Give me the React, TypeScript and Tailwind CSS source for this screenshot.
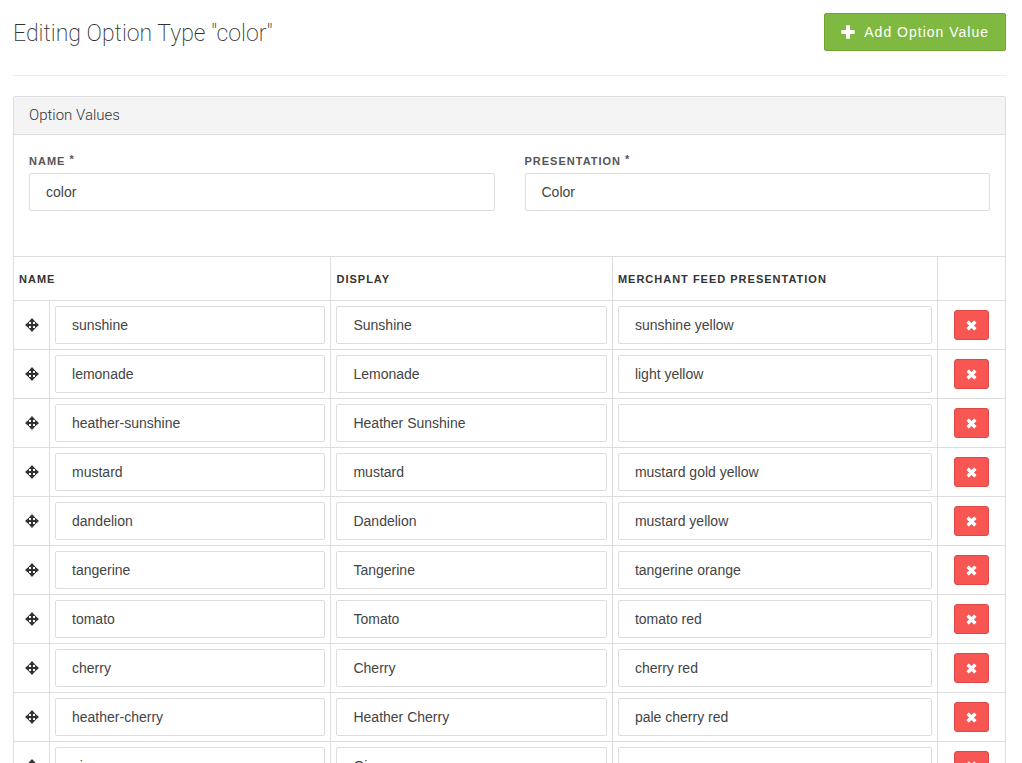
import React from "react";

type OptionValue = { name: string; display: string; feed: string };

const optionValues: OptionValue[] = [
  { name: "sunshine", display: "Sunshine", feed: "sunshine yellow" },
  { name: "lemonade", display: "Lemonade", feed: "light yellow" },
  { name: "heather-sunshine", display: "Heather Sunshine", feed: "" },
  { name: "mustard", display: "mustard", feed: "mustard gold yellow" },
  { name: "dandelion", display: "Dandelion", feed: "mustard yellow" },
  { name: "tangerine", display: "Tangerine", feed: "tangerine orange" },
  { name: "tomato", display: "Tomato", feed: "tomato red" },
  { name: "cherry", display: "Cherry", feed: "cherry red" },
  { name: "heather-cherry", display: "Heather Cherry", feed: "pale cherry red" },
  { name: "ginger", display: "Ginger", feed: "" },
];

const icons = {
  plus: "M5.5 .3h3q.5 0 .5.5V5h4.2q.5 0 .5.5v3q0 .5-.5.5H9v4.2q0 .5-.5.5h-3q-.5 0-.5-.5V9H.8q-.5 0-.5-.5v-3q0-.5.5-.5H5V.8q0-.5.5-.5z",
  move: "M7 0l3.6 4H8v2h2V3.4L14 7l-4 3.6V8H8v2h2.6L7 14l-3.6-4H6V8H4v2.6L0 7l4-3.6V6h2V4H3.4z",
  remove:
    "M3.7 1.9q.4-.4.8 0L7 4.4l2.5-2.5q.4-.4.8 0l1.8 1.8q.4.4 0 .8L9.600 7l2.500 2.500q.4.4 0 .8l-1.800 1.800q-.4.4-.8 0L7 9.600l-2.500 2.500q-.4.4-.8 0l-1.800-1.800q-.4-.4 0-.8L4.400 7 1.900 4.500q-.4-.4 0-.8z",
};

function Icon({ name, className }: { name: keyof typeof icons; className: string }) {
  return (
    <svg viewBox="0 0 14 14" fill="currentColor" aria-hidden="true" className={className}>
      <path d={icons[name]} />
    </svg>
  );
}

function TextInput(props: React.InputHTMLAttributes<HTMLInputElement>) {
  return (
    <input
      type="text"
      {...props}
      className="block h-[38px] w-full min-w-0 rounded-xs border border-[#ddd] bg-white px-4 text-sm text-[#444] outline-none focus:border-[#7fb942]"
    />
  );
}

function Field({ id, label, value }: { id: string; label: string; value: string }) {
  return (
    <div>
      <label
        htmlFor={id}
        className="flex h-4 items-start gap-1 text-[11px] leading-4 font-bold tracking-[1px] text-[#555] uppercase"
      >
        {label} <span className="leading-3">*</span>
      </label>
      <div className="mt-1">
        <TextInput id={id} defaultValue={value} required />
      </div>
    </div>
  );
}

const headCell = "h-11 border-t border-[#ddd] px-[5px] pt-0.5 text-left align-middle";
const bodyCell = "border-t border-l border-[#ddd] p-[5px]";

export default function App() {
  return (
    <main className="bg-white pr-4 pl-[13px] font-['Liberation_Sans',Arial,sans-serif] text-[#333]">
      <header className="flex items-start justify-between border-b border-[#eee] pt-[13px] pb-5">
        <h1 className="font-['Roboto',sans-serif] text-[23px] leading-[42px] font-extralight">
          Editing Option Type "color"
        </h1>
        <button
          type="button"
          className="flex h-[38px] items-center gap-[9px] rounded-xs border border-[#71a436] bg-[#7fb942] px-4 text-sm tracking-[1px] text-white"
        >
          <Icon name="plus" className="size-[14px]" />
          Add Option Value
        </button>
      </header>

      <section className="mt-5 rounded-t-xs border border-[#ddd]">
        <h2 className="border-b border-[#ddd] bg-[#f4f4f4] px-[15px] py-2 font-['Roboto',sans-serif] text-[15px] leading-[21px] font-light">
          Option Values
        </h2>
        <div className="grid grid-cols-2 gap-[30px] px-[15px] pt-[18px] pb-[45px]">
          <Field id="option-name" label="Name" value="color" />
          <Field id="option-presentation" label="Presentation" value="Color" />
        </div>

        <table className="w-full table-fixed border-separate border-spacing-0">
          <colgroup>
            <col className="w-[35px]" />
            <col className="w-[28.4%]" />
            <col className="w-[28.4%]" />
            <col className="w-[32.8%]" />
            <col className="w-[68px]" />
          </colgroup>
          <thead>
            <tr className="text-[11px] tracking-[1px] uppercase">
              <th colSpan={2} className={headCell}>Name</th>
              <th className={headCell + " border-l"}>Display</th>
              <th className={headCell + " border-l"}>Merchant Feed Presentation</th>
              <th className={headCell + " border-l"} aria-label="Actions" />
            </tr>
          </thead>
          <tbody>
            {optionValues.map((row) => (
              <tr key={row.name}>
                <td className="border-t border-[#ddd] text-center">
                  <Icon name="move" className="mx-auto size-[14px]" />
                </td>
                <td className={bodyCell}>
                  <TextInput aria-label="Name" defaultValue={row.name} />
                </td>
                <td className={bodyCell}>
                  <TextInput aria-label="Display" defaultValue={row.display} />
                </td>
                <td className={bodyCell}>
                  <TextInput aria-label="Merchant feed presentation" defaultValue={row.feed} />
                </td>
                <td className={bodyCell}>
                  <button
                    type="button"
                    aria-label={"Remove " + row.name}
                    className="mx-auto flex h-[30px] w-[35px] items-center justify-center rounded-[3px] border border-[#dd4946] bg-[#f75653] text-white"
                  >
                    <Icon name="remove" className="size-[13px]" />
                  </button>
                </td>
              </tr>
            ))}
          </tbody>
        </table>
      </section>
    </main>
  );
}
